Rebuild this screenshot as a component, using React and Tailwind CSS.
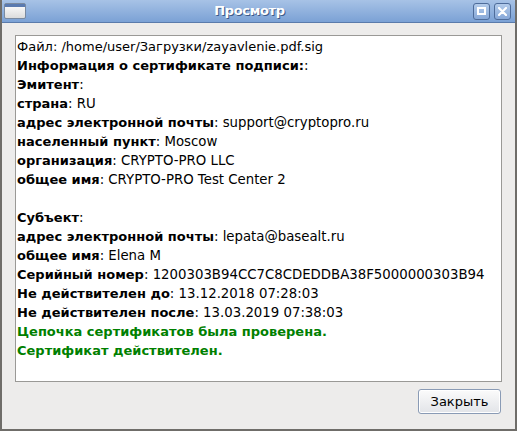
import React from 'react';

const font = { fontFamily: '"DejaVu Sans", sans-serif' };

function Row({ label, value, colon = ':' }) {
  return (
    <div>
      <span className="font-bold">{label}</span>
      <span className="text-[13.3px]">
        {colon}
        {value ? ' ' + value : ''}
      </span>
    </div>
  );
}

export default function App() {
  return (
    <div
      className="w-[517px] h-[431px] flex flex-col bg-[#edeceb] border-x-2 border-b-2 border-[#6f6d69] overflow-hidden"
      style={font}
    >
      {/* Title bar */}
      <div className="h-[23px] flex items-center justify-between px-[2px] bg-gradient-to-b from-[#a7c2e6] to-[#7ba1d5] border-b border-[#5a7bab] rounded-t-[4px] -mx-[2px]">
        <div className="w-[22px] h-[16px] ml-[2px] rounded-[2px] border border-[#7a8aa0] bg-gradient-to-b from-white to-[#dcdcdc] flex flex-col">
          <div className="h-[3px] bg-[#5a7ab0]" />
        </div>
        <div
          className="text-white font-bold text-[13px] tracking-tight"
          style={{ textShadow: '1px 1px 0 #3d5a88' }}
        >
          Просмотр
        </div>
        <div className="flex gap-[4px] mr-[4px]">
          <div className="w-[17px] h-[17px] rounded-[3px] border border-[#4e6c9a] bg-gradient-to-b from-[#b3cbea] to-[#87a8d8] flex items-center justify-center">
            <div className="w-[9px] h-[8px] border-2 border-white" />
          </div>
          <div className="w-[17px] h-[17px] rounded-[3px] border border-[#4e6c9a] bg-gradient-to-b from-[#b3cbea] to-[#87a8d8] flex items-center justify-center">
            <svg width="9" height="9" viewBox="0 0 9 9">
              <path d="M1 1L8 8M8 1L1 8" stroke="white" strokeWidth="2.2" strokeLinecap="round" />
            </svg>
          </div>
        </div>
      </div>

      {/* Body */}
      <div className="flex-1 flex flex-col px-[13px] pt-[12px] pb-[14px]">
        <div className="h-[347px] bg-white border border-[#9a9996] px-[1px] py-[1px] text-[13px] leading-[19px] text-black">
          <div>Файл: /home/user/Загрузки/zayavlenie.pdf.sig</div>
          <Row label="Информация о сертификате подписи:" />
          <Row label="Эмитент" />
          <Row label="страна" value="RU" />
          <Row label="адрес электронной почты" value="support@cryptopro.ru" />
          <Row label="населенный пункт" value="Moscow" />
          <Row label="организация" value="CRYPTO-PRO LLC" />
          <Row label="общее имя" value="CRYPTO-PRO Test Center 2" />
          <div className="h-[19px]" />
          <Row label="Субъект" />
          <Row label="адрес электронной почты" value="lepata@basealt.ru" />
          <Row label="общее имя" value="Elena M" />
          <Row label="Серийный номер" value="1200303B94CC7C8CDEDDBA38F5000000303B94" />
          <Row label="Не действителен до" value="13.12.2018 07:28:03" />
          <Row label="Не действителен после" value="13.03.2019 07:38:03" />
          <div className="font-bold text-[#008000]">Цепочка сертификатов была проверена.</div>
          <div className="font-bold text-[#008000]">Сертификат действителен.</div>
        </div>
        <div className="flex justify-end mt-[7px] pr-[1px]">
          <button
            className="w-[83px] h-[25px] rounded-[3px] border border-[#8a9bb5] bg-gradient-to-b from-[#fbfbfb] to-[#e2e4e8] text-[13px] text-black shadow-[inset_0_0_0_1px_#ffffff]"
            style={font}
          >
            Закрыть
          </button>
        </div>
      </div>
    </div>
  );
}
